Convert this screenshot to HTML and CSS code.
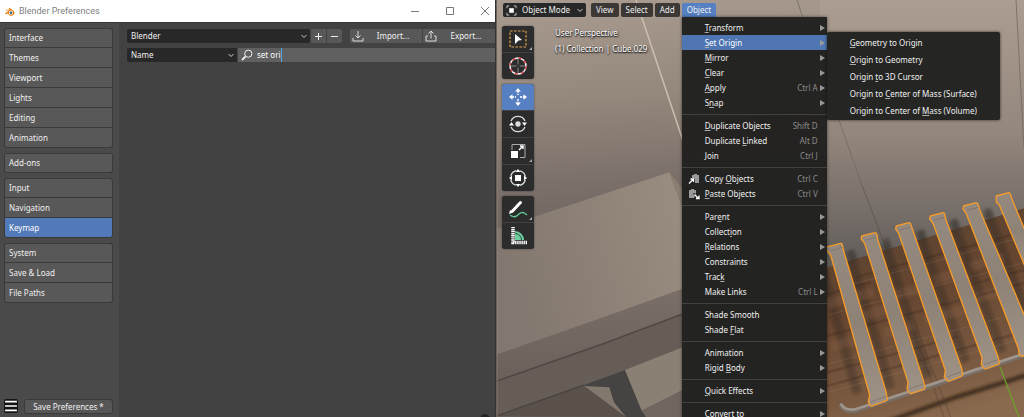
FILE: index.html
```html
<!DOCTYPE html>
<html lang="en">
<head>
<meta charset="utf-8">
<title>Blender Preferences</title>
<link rel="stylesheet" href="styles.css">
</head>
<body>
<div class="desktop">
  <section class="prefs">
    <header class="titlebar">
      <svg class="logo" viewBox="0 0 24 20"><path d="M2 15 11 8H4V6h9L10 3l2-1 9 7c3 3 2 9-4 10-5 1-8-2-8-6l-4 3z" fill="#ea7600"/><circle cx="15" cy="12.500" r="4.500" fill="#fff"/><circle cx="15" cy="12.500" r="2.700" fill="#265787"/></svg>
      <h1 class="title">Blender Preferences</h1>
      <div class="window-buttons">
        <button aria-label="Minimize"><svg viewBox="0 0 10 10"><path d="M1 5.500h8"/></svg></button>
        <button aria-label="Maximize"><svg viewBox="0 0 10 10"><path d="M1.500 1.500h7v7h-7z"/></svg></button>
        <button aria-label="Close"><svg viewBox="0 0 10 10"><path d="m1 1 8 8M9 1 1 9"/></svg></button>
      </div>
    </header>
    <div class="prefs-body">
      <nav class="sidebar">
        <div class="tabs">
          <button>Interface</button><button>Themes</button><button>Viewport</button><button>Lights</button><button>Editing</button><button>Animation</button>
        </div>
        <div class="tabs"><button>Add-ons</button></div>
        <div class="tabs"><button>Input</button><button>Navigation</button><button class="active">Keymap</button></div>
        <div class="tabs"><button>System</button><button>Save &amp; Load</button><button>File Paths</button></div>
        <div class="sidebar-footer">
          <button class="burger" aria-label="Menu"><svg viewBox="0 0 13 13"><path d="M1 2.500h11M1 6.500h11M1 10.500h11" stroke="#fff" stroke-width="1.600"/></svg></button>
          <button class="save">Save Preferences *</button>
        </div>
      </nav>
      <main class="keymap">
        <div class="row">
          <div class="dropdown preset">
            <select aria-label="Key configuration"><option>Blender</option></select>
            <svg class="chevron" viewBox="0 0 8 8"><path d="m1.500 3 2.500 2.500L6.500 3"/></svg>
          </div>
          <button class="square" aria-label="Add preset"><svg viewBox="0 0 9 9"><path d="M4.500 1v7M1 4.500h7"/></svg></button>
          <button class="square last" aria-label="Remove preset"><svg viewBox="0 0 9 9"><path d="M1 4.500h7"/></svg></button>
          <div class="files">
            <button><svg viewBox="0 0 12 12"><path d="M6 1v7M3.500 5.500 6 8l2.500-2.500M1 8v3h10V8"/></svg><span>Import...</span></button>
            <button><svg viewBox="0 0 12 12"><path d="M6 8.500V1M3.500 3.500 6 1l2.500 2.500M3 6H1v5h10V6H9"/></svg><span>Export...</span></button>
          </div>
        </div>
        <div class="row">
          <div class="dropdown filter">
            <select aria-label="Filter type"><option>Name</option></select>
            <svg class="chevron" viewBox="0 0 8 8"><path d="m1.500 3 2.500 2.500L6.500 3"/></svg>
          </div>
          <label class="search">
            <svg viewBox="0 0 12 12"><circle cx="7.300" cy="4.700" r="3.600"/><path d="M4.500 7.500 1 11" stroke-width="1.800"/></svg>
            <input type="text" value="set ori" aria-label="Search keymap"><span class="caret"></span>
          </label>
        </div>
        <span class="corner"></span>
      </main>
    </div>
  </section>

  <section class="viewport">
    <svg class="scene" viewBox="496 0 528 417" preserveAspectRatio="xMinYMin slice">
      <defs>
        <linearGradient id="wall" x1="0" y1="0" x2=".08" y2="1"><stop offset="0" stop-color="#a99b90"/><stop offset=".25" stop-color="#94877c"/><stop offset=".5" stop-color="#756b65"/><stop offset="1" stop-color="#625c59"/></linearGradient>
        <linearGradient id="wallRight" x1="0" y1="0" x2="0" y2="1"><stop offset="0" stop-color="#ac9d91"/><stop offset=".5" stop-color="#93867c"/><stop offset="1" stop-color="#5f5b59"/></linearGradient>
        <linearGradient id="desk" x1="0" y1=".3" x2="1" y2="0"><stop offset="0" stop-color="#83786f"/><stop offset="1" stop-color="#9a8e81"/></linearGradient>
        <linearGradient id="strip" x1="0" y1="0" x2="0" y2="1"><stop offset="0" stop-color="#7b7068"/><stop offset="1" stop-color="#6a605a"/></linearGradient>
        <linearGradient id="wood" x1=".3" y1="0" x2=".6" y2="1"><stop offset="0" stop-color="#5a4534"/><stop offset=".4" stop-color="#65452f"/><stop offset=".8" stop-color="#7a5a41"/><stop offset="1" stop-color="#8a6a4f"/></linearGradient>
        <linearGradient id="slat" x1="0" y1="0" x2="0" y2="1"><stop offset="0" stop-color="#958a7f"/><stop offset=".5" stop-color="#8e8277"/><stop offset="1" stop-color="#9e9287"/></linearGradient>
        <filter id="soft"><feGaussianBlur stdDeviation="5"/></filter>
      </defs>
      <path d="M496 0h528v417H496z" fill="url(#wall)"/>
      <path d="M820 0h204v270H820z" fill="url(#wallRight)"/>
      <path d="m636 0 47 141" stroke="#cdbfaf" stroke-width="1.500"/>
      <path d="m797 0 6 18M839 120l21 60M1016 0l8 148" stroke="#746a61" stroke-width=".8" fill="none"/>
      <g transform="translate(496 140) scale(.33333)">
        <path d="M0 268 520 97l40 108v242L300 540 0 645z" fill="url(#desk)"/>
        <path d="m520 97 40 50v58z" fill="#8b7e73"/>
        <path d="m0 645 300-105 260-93v76L0 727z" fill="url(#strip)"/>
        <path d="m0 727 320-112 240-91v98L265 735 0 831z" fill="#665d57"/>
        <path d="m0 724 320-112 240-90" stroke="#504842" stroke-width="5" fill="none"/>
        <path d="m0 828 265-93 140 96z" fill="#5a514b"/>
        <path d="m0 828 265-93" stroke="#4c4540" stroke-width="4"/>
        <path d="m265 735 122-45 63 141h-60z" fill="#454442"/>
        <path d="m265 738 75 4 14 45 36 44z" fill="#83786d"/>
        <path d="m387 690 173-68v128l-123 62z" fill="#8b8074"/>
        <path d="m437 812 123-62v81H450z" fill="#70665f"/>
        <path d="M4 0v831" stroke="#a09488" stroke-opacity=".5" stroke-width="2"/>
      </g>
      <path d="M496 0h1v417h-1z" fill="#6c6158"/>
      <g transform="translate(824 180) scale(.33333)">
        <path d="M-20 271 600 85v640H-20z" fill="url(#wood)"/>
        <g stroke="#241a14" stroke-opacity=".3" stroke-width="26" filter="url(#soft)">
          <path d="m75 215 125 410M182 190l130 400M285 155l140 390M385 125l150 390M490 95l115 300M-5 270l105 370"/>
        </g>
        <g stroke="#3b342e" stroke-opacity=".45" stroke-width="22" filter="url(#soft)"><path d="m80 210 12 30M184 175l12 35M288 150l10 30M388 118l12 32M488 85l10 30"/></g>
        <g stroke="#94694a" stroke-opacity=".25" stroke-width="30" filter="url(#soft)">
          <path d="m0 375 150-40M110 410l110-32M200 350l90-25M330 300l80-22M440 260l100-28M20 500l110-30M180 460l90-25M300 420l120-30M440 360l100-28"/>
        </g>
        <g stroke="#39251a" stroke-opacity=".25" stroke-width="8"><path d="m0 345 140-38M0 470l600-160M100 290l500-135M0 580l400-110M420 320l180-50M0 620l600-165"/></g>
        <g stroke="#b89c80" stroke-opacity=".25" stroke-width="2"><path d="m0 408 600-160M0 555l600-160M60 320l540-150M0 640l600-165"/></g>
        <path d="M190 725 400 650l210-65" stroke="#2b1c14" stroke-opacity=".75" stroke-width="14" fill="none" filter="url(#soft)"/>
        <path d="M108 0 380 711M250 400l110 311" stroke="#413a35" stroke-opacity=".6" stroke-width="2"/>
        <path d="M52 676q12 22 45 15L610 522" fill="none" stroke="#786e65" stroke-width="15" stroke-linecap="round"/>
        <path d="M52 674q12 20 45 13L610 518" fill="none" stroke="#a0958b" stroke-width="8" stroke-linecap="round"/>
        <path d="m528 560 58 155" stroke="#6f9e2d" stroke-width="4"/>
        <g fill="url(#slat)" stroke="#f69b28" stroke-width="4" stroke-linejoin="round">
          <path d="m0 203 50-13q5 0 6 8l2 12 128 425 4 22q0 5-5 6l-40 15q-7 2-8-4l-4-9 4-20L20 225z"/>
          <path d="m113 168 40-10q5 0 6 6l2 14 137 423 5 22q0 5-5 6l-35 11q-7 2-8-4l-6-9 3-20L122 190l-10-13z"/>
          <path d="m217 138 38-10q5 0 6 6l5 16 147 415 3 18q0 5-5 6l-34 14q-7 2-8-3l-8-9 3-20L224 160l-9-13z"/>
          <path d="m319 108 38-10q5 0 5 6l4 16 156 410 4 18q0 5-5 6l-34 12q-7 2-8-3l-7-10 2-20L327 130l-10-13z"/>
          <path d="m419 78 37-10q6 0 7 6l5 18 142 335v98l-17 4-7-5-3-19L427 101l-10-14z"/>
          <path d="m517 48 37-10q5 0 6 6l4 14 46 110v108L526 75l-9-8z"/>
        </g>
        <path d="m22 213 33-11M124 181l32-9M226 151l34-9M329 121l32-9M430 91l32-9M141 665l46-16M256 627l42-15M370 591l42-16M480 554l42-15" stroke="#786d63" stroke-width="2"/>
      </g>
    </svg>

    <header class="view-header">
      <div class="dropdown mode">
        <svg class="mode-icon" viewBox="0 0 12 12"><path d="M3.500 3.500h5v5h-5z" fill="#fff"/><path d="M1 3.500V1h2.500M8.500 1H11v2.500M11 8.500V11H8.500M3.500 11H1V8.500" fill="none" stroke="#ccc"/></svg>
        <select aria-label="Mode"><option>Object Mode</option></select>
        <svg class="chevron" viewBox="0 0 8 8"><path d="m1.500 3 2.500 2.500L6.500 3"/></svg>
      </div>
      <button class="pill">View</button><button class="pill">Select</button><button class="pill">Add</button>
      <div class="menu-anchor">
        <button class="pill open">Object</button>
        <div class="menu">
          <button class="item sub"><span><u>T</u>ransform</span></button>
          <div class="entry">
            <button class="item sub hover"><span><u>S</u>et Origin</span></button>
            <div class="submenu">
              <button class="item"><span><u>G</u>eometry to Origin</span></button>
              <button class="item"><span><u>O</u>rigin to Geometry</span></button>
              <button class="item"><span>Origin <u>t</u>o 3D Cursor</span></button>
              <button class="item"><span>Origin to <u>C</u>enter of Mass (Surface)</span></button>
              <button class="item"><span>Origin to Center of <u>M</u>ass (Volume)</span></button>
            </div>
          </div>
          <button class="item sub"><span><u>M</u>irror</span></button>
          <button class="item sub"><span><u>C</u>lear</span></button>
          <button class="item sub"><span><u>A</u>pply</span><kbd>Ctrl A</kbd></button>
          <button class="item sub"><span>S<u>n</u>ap</span></button>
          <hr>
          <button class="item"><span><u>D</u>uplicate Objects</span><kbd>Shift D</kbd></button>
          <button class="item"><span>Duplicate <u>L</u>inked</span><kbd>Alt D</kbd></button>
          <button class="item"><span><u>J</u>oin</span><kbd>Ctrl J</kbd></button>
          <hr>
          <button class="item"><svg class="clip" viewBox="0 0 12 12"><path d="M4 2h2V1h3v1h2v8H7V6L5 5H4z" fill="#999"/><path d="M1 10.500 5.500 6M2.500 6h3v3" fill="none" stroke="#fff" stroke-width="1.300"/></svg><span>Copy <u>O</u>bjects</span><kbd>Ctrl C</kbd></button>
          <button class="item"><svg class="clip" viewBox="0 0 12 12"><path d="M1 2h2V1h3v1h2v4L6 5 5 6l2 2-1 2H1z" fill="#999"/><path d="m6.500 6.500 4 4M11 7.500v3H8" fill="none" stroke="#fff" stroke-width="1.300"/></svg><span><u>P</u>aste Objects</span><kbd>Ctrl V</kbd></button>
          <hr>
          <button class="item sub"><span>Par<u>e</u>nt</span></button>
          <button class="item sub"><span>Collect<u>i</u>on</span></button>
          <button class="item sub"><span><u>R</u>elations</span></button>
          <button class="item sub"><span>Constraints</span></button>
          <button class="item sub"><span>Trac<u>k</u></span></button>
          <button class="item sub"><span>Make Links</span><kbd>Ctrl L</kbd></button>
          <hr>
          <button class="item"><span>Shade Smooth</span></button>
          <button class="item"><span>Shade <u>F</u>lat</span></button>
          <hr>
          <button class="item sub"><span>Animation</span></button>
          <button class="item sub"><span>Rigid <u>B</u>ody</span></button>
          <hr>
          <button class="item sub"><span><u>Q</u>uick Effects</span></button>
          <hr>
          <button class="item sub"><span>Convert to</span></button>
        </div>
      </div>
    </header>

    <div class="view-body">
      <div class="toolbar">
        <div class="tools">
          <button class="more" aria-label="Select box"><svg viewBox="0 0 20 20"><path d="M2 2h16v16H2z" fill="none" stroke="#dfa24e" stroke-width="1.200" stroke-dasharray="2.600 1.400"/><path d="m7 5 7 6-3.500.5L7 15z" fill="#fff"/></svg></button>
          <button aria-label="Cursor"><svg viewBox="0 0 20 20" fill="none"><circle cx="10" cy="10" r="8" stroke="#fff" stroke-width="1.400"/><circle cx="10" cy="10" r="8" stroke="#d43c45" stroke-width="1.400" stroke-dasharray="3.140 3.140"/><path d="M10 3v5.500M10 11.500V17M3 10h5.500M11.500 10H17" stroke="#888"/></svg></button>
        </div>
        <div class="tools">
          <button class="active" aria-label="Move"><svg viewBox="0 0 20 20"><path d="m10 1 2.800 3.500H7.200zM10 19l2.800-3.500H7.200zM1 10l3.500-2.800v5.600zM19 10l-3.500-2.800v5.600z" fill="#fff"/><path d="M10 4v4M10 12v4M4 10h4M12 10h4" stroke="#fff" stroke-width="1.400" stroke-dasharray="2 .8"/></svg></button>
          <button aria-label="Rotate"><svg viewBox="0 0 20 20"><circle cx="10" cy="10" r="2.700" fill="#ddd"/><path d="M3 7a7.600 7.600 0 0 1 14 0M17 13a7.600 7.600 0 0 1-14 0" fill="none" stroke="#ddd" stroke-width="1.300"/><path d="m14 8.500 2.500 3.500L19 8.500zM6 11.500 3.500 8 1 11.500z" fill="#fff"/></svg></button>
          <button class="more" aria-label="Scale"><svg viewBox="0 0 20 20"><path d="M4 9V3.500h13v13h-5" fill="none" stroke="#aaa"/><path d="M3 10h7v7H3z" fill="#fff"/><path d="m11 9 4-4M12 5h3v3" fill="none" stroke="#fff" stroke-width="1.500"/></svg></button>
          <button aria-label="Transform"><svg viewBox="0 0 20 20"><circle cx="10" cy="10" r="7.500" fill="none" stroke="#ddd" stroke-width="1.300" stroke-dasharray="7.780 4" stroke-dashoffset="-2"/><path d="M7 7h6v6H7zM10 1l2.500 3h-5zM10 19l2.500-3h-5zM1 10l3-2.500v5zM19 10l-3-2.500v5z" fill="#fff"/></svg></button>
        </div>
        <div class="tools">
          <button class="more" aria-label="Annotate"><svg viewBox="0 0 20 20"><path d="m1 15 1-4 3 2.500z" fill="#fff"/><path d="M2 16c4 3 6 2 9-1s6-1 8 1" fill="none" stroke="#5dc393" stroke-width="1.400"/><path d="m4.500 12 8-8.500" stroke="#fff" stroke-width="3" stroke-linecap="round"/></svg></button>
          <button aria-label="Measure"><svg viewBox="0 0 20 20"><path d="M7 14V5a9 9 0 0 1 9 9z" fill="#6fcf9f"/><path d="M7 7.500a6.500 6.500 0 0 1 6.500 6.500" fill="none" stroke="#2c4c3e"/><path d="M5 1v15.500h14" fill="none" stroke="#fff" stroke-width="3.500" stroke-dasharray="1.300 .6"/></svg></button>
        </div>
      </div>
      <div class="overlay-text"><p>User Perspective</p><p>(1) Collection | Cube.029</p></div>
    </div>
  </section>
</div>
</body>
</html>
```
FILE: styles.css
```css
* { box-sizing: border-box; }
body { margin: 0; font-family: "Noto Sans", "Open Sans", sans-serif; font-size: 8px; line-height: 14px; color: #f0f0f0; background: #424242; }
button, select, input { margin: 0; padding: 0; border: 0; font: inherit; color: inherit; background: none; }
button svg { display: block; }
.desktop { display: grid; grid-template-columns: 31fr 33fr; height: 100vh; overflow: hidden; }

/* Preferences window */
.prefs { display: flex; flex-direction: column; min-width: 0; border-right: 1px solid #333; }
.titlebar { display: flex; align-items: center; height: 22px; padding-left: 4px; gap: 4px; background: #fff; }
.logo { width: 11px; height: 11px; }
.title { margin: 0; flex: 1; font: 9px/20px Roboto, "Noto Sans", sans-serif; color: #808080; }
.window-buttons { display: flex; }
.window-buttons button { display: grid; place-items: center; width: 35px; height: 20px; }
.window-buttons button:last-child { width: 28px; padding-left: 7px; }
.window-buttons svg { width: 10px; height: 10px; fill: none; stroke: #777; }
.prefs-body { flex: 1; display: flex; min-height: 0; border-top: 1px solid #363636; }
.sidebar { display: flex; flex-direction: column; gap: 5px; width: 119px; padding: 5px 6px 3px 4px; background: #4a4a4a; }
.tabs { display: flex; flex-direction: column; gap: 1px; padding: 1px; border-radius: 3px; background: #3a3a3a; overflow: hidden; }
.tabs button { height: 19px; padding-left: 4px; text-align: left; background: #585858; }
.tabs button:first-child { height: 18px; border-radius: 2px 2px 0 0; }
.tabs button:last-child { border-radius: 0 0 2px 2px; }
.tabs .active { background: #5279b8; color: #fff; }
.sidebar-footer { display: flex; justify-content: space-between; margin-top: auto; }
.burger { width: 14px; height: 14px; border-radius: 2px; background: #151515; }
.save { width: 89px; height: 15px; border: 1px solid #3a3a3a; border-radius: 3px; background: #565656; }
.keymap { position: relative; flex: 1; display: flex; flex-direction: column; gap: 5px; min-width: 0; padding: 6px 0 0 8px; overflow: hidden; }
.row { display: flex; gap: 1px; height: 14px; }
.dropdown { position: relative; background: #282828; border-radius: 2px; }
.dropdown select { display: block; width: 100%; height: 14px; padding-left: 4px; appearance: none; }
.chevron { position: absolute; right: 2px; top: 3px; width: 8px; height: 8px; fill: none; stroke: #ccc; pointer-events: none; }
.preset { flex: 1; }
.square { display: grid; place-items: center; width: 15px; background: #585858; }
.square svg { width: 9px; height: 9px; stroke: #eee; }
.last { border-radius: 0 2px 2px 0; }
.files { display: flex; gap: 1px; margin-left: 7px; }
.files button { display: flex; align-items: center; width: 72px; padding-left: 2px; background: #585858; }
.files button:first-child { border-radius: 2px 0 0 2px; }
.files svg { width: 12px; height: 12px; fill: none; stroke: #ddd; }
.files span { flex: 1; text-align: center; }
.filter { width: 110px; border-radius: 2px 0 0 2px; }
.search { flex: 1; display: flex; align-items: center; padding-left: 3px; background: #606060; }
.search svg { width: 12px; height: 12px; margin-right: 4px; fill: none; stroke: #eee; }
.search input { field-sizing: content; height: 14px; outline: 0; color: #fff; }
.caret { width: 1px; height: 14px; background: #4ba5ed; }
.corner { position: absolute; right: 5px; bottom: -7px; width: 10px; height: 10px; border-radius: 50%; background: #252525; }

/* 3D viewport */
.viewport { position: relative; display: flex; flex-direction: column; min-width: 0; overflow: hidden; }
.scene { position: absolute; inset: 0; width: 100%; height: 100%; }
.view-header { position: relative; z-index: 2; display: flex; gap: 2px; padding: 3px 0 0 7px; }
.mode { display: flex; align-items: center; width: 83px; height: 14px; margin-right: 3px; padding-left: 3px; }
.mode-icon { flex: none; width: 11px; height: 11px; }
.mode select { padding-left: 5px; }
.pill { height: 14px; padding: 0 5px; border-radius: 2px; background: #3b3835; color: #eee; }
.menu-anchor { position: relative; }
.pill.open { display: block; background: #5680c2; border-radius: 2px 2px 0 0; }
.menu { position: absolute; top: 100%; left: 0; width: 145px; padding: 3px 0; background: rgba(34, 34, 33, .98); box-shadow: 0 0 3px rgba(0, 0, 0, .5); }
.entry { position: relative; }
.item { display: flex; align-items: center; position: relative; width: 100%; height: 15px; padding: 0 9px 0 23px; line-height: 10px; color: #f0f0f0; white-space: nowrap; }
.item u { text-underline-offset: 1px; text-decoration-thickness: 1px; text-decoration-color: #aaa; }
.item kbd { margin-left: auto; font: inherit; color: #8c8c8c; }
.sub::after { content: ""; position: absolute; right: 2px; top: 5px; border: solid transparent; border-width: 3px 0 3px 5px; border-left-color: #999; }
.hover { background: #4f76b3; color: #fff; }
.clip { position: absolute; left: 6px; top: 2px; width: 12px; height: 12px; }
.menu hr { height: 1px; margin: 4px 0 3px; border: 0; background: #414141; }
.submenu { position: absolute; left: 100%; top: -3px; width: 173px; padding: 2px 0 1px; border-radius: 2px; background: #252524; box-shadow: 0 0 3px rgba(0, 0, 0, .7); }
.submenu .item { height: 17px; }
.view-body { position: relative; display: flex; gap: 21px; padding: 9px 0 0 6px; }
.toolbar { display: flex; flex-direction: column; gap: 5px; }
.tools { display: flex; flex-direction: column; gap: 1px; width: 32px; border-radius: 3px; overflow: hidden; background: #414141; box-shadow: 0 0 2px rgba(0, 0, 0, .5); }
.tools button { position: relative; display: grid; place-items: center; height: 26px; background: #2c2c2c; }
.tools .active { background: #5680c2; }
.tools svg { width: 20px; height: 20px; }
.more::after { content: ""; position: absolute; right: 2px; bottom: 2px; border: solid transparent; border-width: 3px 0 0 3px; border-bottom: 0; border-right: 3px solid #aaa; border-left: 0; }
.overlay-text { text-shadow: 0 1px 1px #222, 1px 1px 2px #222; color: #fff; }
.overlay-text p { margin: 0 0 2px; }
```
